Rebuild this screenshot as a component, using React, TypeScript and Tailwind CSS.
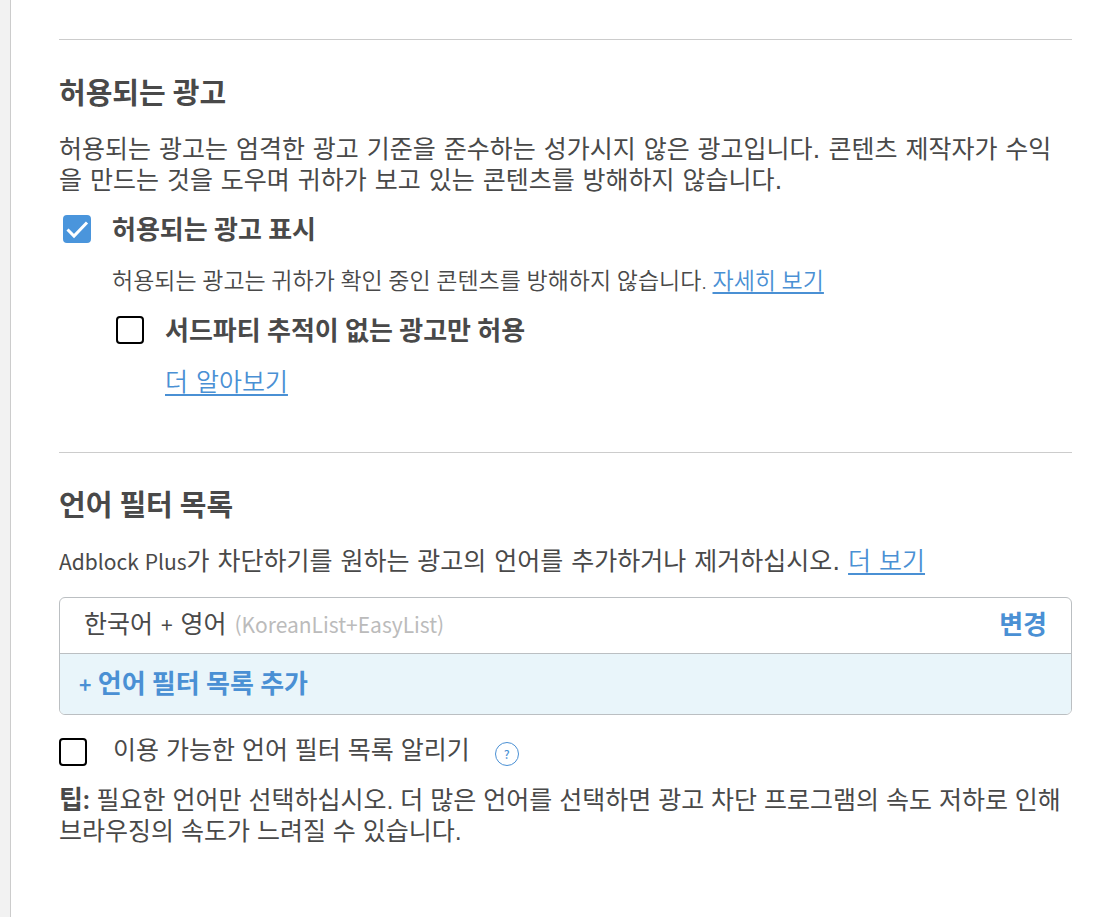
import { useState } from "react";
import type { ReactNode } from "react";

const Checkbox = ({ id, defaultChecked = false }: { id: string; defaultChecked?: boolean }) => {
  const [checked, setChecked] = useState(defaultChecked);

  return (
    <span className="relative block size-7 shrink-0">
      <input
        id={id}
        type="checkbox"
        checked={checked}
        onChange={(e) => setChecked(e.target.checked)}
        className="block size-7 appearance-none rounded-[4px] border-2 border-black bg-white checked:border-[#4a95dc] checked:bg-[#4a95dc]"
      />
      {checked && (
        <svg viewBox="0 0 28 28" fill="none" className="pointer-events-none absolute inset-0 size-7">
          <path d="M4.5 14.5l6.5 6.5L24 7.5" stroke="#fff" strokeWidth="3" />
        </svg>
      )}
    </span>
  );
};

const TextLink = ({ children }: { children: ReactNode }) => (
  <a
    href="#"
    className="font-[350] text-[#4a90d4] underline decoration-2 underline-offset-3 [text-decoration-skip-ink:none]"
  >
    {children}
  </a>
);

const Latin = ({ children }: { children: ReactNode }) => (
  <span className="font-['Noto_Sans_CJK_KR',sans-serif] text-[21px]">{children}</span>
);

const Strong = ({ children }: { children: ReactNode }) => (
  <strong className="font-[Lato,'Noto_Sans_CJK_KR',sans-serif] text-[26px] font-bold">{children}</strong>
);

const App = () => {
  return (
    <div
      lang="ko"
      className="flex min-h-screen bg-[#f2f2f2] font-['DejaVu_Sans','Noto_Sans_CJK_KR',sans-serif] text-[25px] leading-[31px] text-[#494949]"
    >
      <main className="ml-[10px] flex-1 border-l border-[#cccccc] bg-white pt-[39px] pr-[39px] pb-10 pl-12">
        <section className="border-t border-[#cccccc] pt-9 pb-[54px]">
          <h2 className="font-[Lato,'Noto_Sans_CJK_KR',sans-serif] text-[29px] leading-[34px] font-bold">허용되는 광고</h2>
          <p className="mt-6">
            허용되는 광고는 엄격한 광고 기준을 준수하는 성가시지 않은 광고입니다. 콘텐츠 제작자가 수익을 만드는 것을 도우며 귀하가 보고 있는 콘텐츠를 방해하지 않습니다.
          </p>
          <div className="mt-4 flex items-center gap-[21px] pl-1">
            <Checkbox id="acceptable-ads" defaultChecked />
            <label htmlFor="acceptable-ads" className="pt-0.5">
              <Strong>허용되는 광고 표시</Strong>
            </label>
          </div>
          <div className="pl-[53px]">
            <p className="mt-5 font-[Roboto,'Noto_Sans_CJK_KR',sans-serif] text-[23px] font-[350]">
              허용되는 광고는 귀하가 확인 중인 콘텐츠를 방해하지 않습니다. <TextLink>자세히 보기</TextLink>
            </p>
            <div className="mt-4 flex items-center gap-[21px] pl-1">
              <Checkbox id="privacy-ads" />
              <label htmlFor="privacy-ads" className="pt-0.5">
                <Strong>서드파티 추적이 없는 광고만 허용</Strong>
              </label>
            </div>
            <p className="mt-5 pl-[53px]">
              <TextLink>더 알아보기</TextLink>
            </p>
          </div>
        </section>

        <section className="border-t border-[#cccccc] pt-[35px]">
          <h2 className="font-[Lato,'Noto_Sans_CJK_KR',sans-serif] text-[29px] leading-[34px] font-bold">언어 필터 목록</h2>
          <p className="mt-6">
            <Latin>Adblock Plus</Latin>가 차단하기를 원하는 광고의 언어를 추가하거나 제거하십시오. <TextLink>더 보기</TextLink>
          </p>
          <div className="mt-5 overflow-hidden rounded-md border border-[#bbbfc2]">
            <div className="flex h-[55px] items-center justify-between px-6 pb-0.5">
              <span>
                한국어 <Latin>+</Latin> 영어{" "}
                <span className="text-[#bbbbbb]">
                  <Latin>(KoreanList+EasyList)</Latin>
                </span>
              </span>
              <button type="button" className="text-[#4a90d4]">
                <Strong>변경</Strong>
              </button>
            </div>
            <button
              type="button"
              className="block h-[61px] w-full border-t border-[#bbbfc2] bg-[#e9f5fa] px-[19px] text-left text-[#4a90d4]"
            >
              <Strong>
                <Latin>+</Latin> 언어 필터 목록 추가
              </Strong>
            </button>
          </div>
          <div className="font-['Liberation_Sans','Noto_Sans_CJK_KR',sans-serif]">
            <div className="mt-5 flex items-center">
              <Checkbox id="notify-languages" />
              <label htmlFor="notify-languages" className="ml-[26px] pb-0.5">이용 가능한 언어 필터 목록 알리기</label>
              <button
                type="button"
                aria-label="도움말"
                className="mt-1 ml-[25px] flex size-6 items-center justify-center rounded-full border border-[#4a90d4] font-['Noto_Sans_CJK_KR',sans-serif] text-[12px] font-medium text-[#4a90d4]"
              >
                ?
              </button>
            </div>
            <p className="mt-4">
              <Strong>팁:</Strong> 필요한 언어만 선택하십시오. 더 많은 언어를 선택하면 광고 차단 프로그램의 속도 저하로 인해 브라우징의 속도가 느려질 수 있습니다.
            </p>
          </div>
        </section>
      </main>
    </div>
  );
};

export default App;
